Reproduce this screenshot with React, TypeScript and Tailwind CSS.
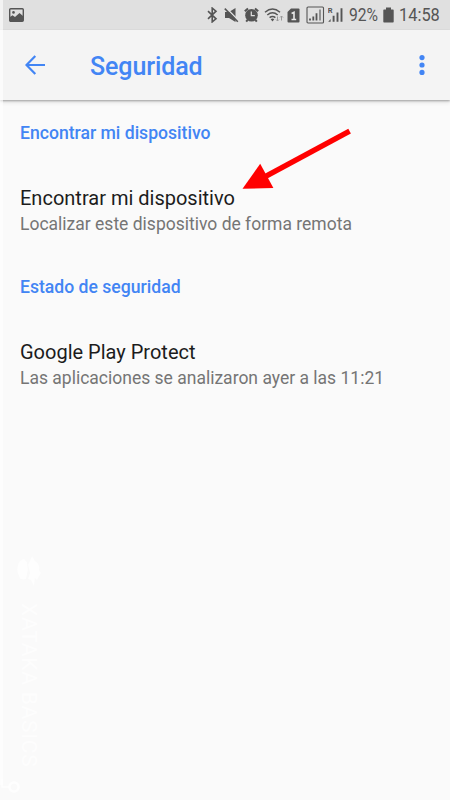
import type { ReactNode } from 'react';

interface PreferenceProps {
  title: string;
  summary: string;
}

function Preference({ title, summary }: PreferenceProps) {
  return (
    <div className="pt-[41px] pb-[39.4px]">
      <p className="text-[20px] leading-[26px] text-[#1c1c1c]">{title}</p>
      <p className="pt-px text-[17.5px] leading-[25px] text-[#757575]">{summary}</p>
    </div>
  );
}

function Category({ children }: { children: ReactNode }) {
  return <h2 className="text-[17.6px] leading-[22px] font-medium text-[#4285f4]">{children}</h2>;
}

function StatusBar() {
  return (
    <div className="flex h-[30px] items-center bg-[#e0e0e0] text-[#555]">
      <svg className="ml-[9px] shrink-0" width="15" height="14" viewBox="0 0 15 14">
        <rect x="0.7" y="0.7" width="13.6" height="12.6" rx="1" fill="none" stroke="currentColor" strokeWidth="1.4" />
        <circle cx="4.5" cy="4.4" r="1.3" fill="currentColor" />
        <path d="M1 13V9l2.5-1.8L6 9l4.5-4L14 8v5z" fill="currentColor" />
      </svg>

      {/* bluetooth */}
      <svg className="ml-[183px] shrink-0" width="11" height="16" viewBox="0 0 11 16">
        <path d="M1 4.2l8 7.6-3.8 3.1V1.1L9 4.2 1 11.8" fill="none" stroke="currentColor" strokeWidth="1.6" />
      </svg>

      {/* muted */}
      <svg className="ml-[6px] shrink-0" width="15" height="16" viewBox="0 0 15 16">
        <path d="M1 5h4l6.5-4v14L5 11H1z" fill="currentColor" />
        <path d="M1.8 .6l13 13.3" stroke="#e0e0e0" strokeWidth="1.4" />
        <path d="M.8 1.6l13 13.1" stroke="currentColor" strokeWidth="1.6" />
      </svg>

      {/* alarm */}
      <svg className="ml-[5px] shrink-0" width="15" height="16" viewBox="0 0 15 16">
        <circle cx="7.5" cy="8.2" r="6.3" fill="currentColor" />
        <path d="M.8 4.3L4 1.4M14.2 4.3L11 1.4M3.6 12.8l-1.4 1.8M11.4 12.8l1.4 1.8" stroke="currentColor" strokeWidth="2" />
        <path d="M7.3 4.6v4h3.5" fill="none" stroke="#e0e0e0" strokeWidth="1.2" />
      </svg>

      {/* wifi */}
      <svg className="ml-[5px] shrink-0" width="21" height="16" viewBox="0 0 21 16">
        <g fill="none" stroke="currentColor" strokeWidth="1.5">
          <path d="M1 5.2q7.5-6.3 15 0" />
          <path d="M3.3 8q5.2-4.4 10.4 0" />
          <path d="M5.6 10.7q2.9-2.4 5.8 0" />
        </g>
        <path d="M6.7 12.2q1.8-1.3 3.6 0L8.5 14.4z" fill="currentColor" />
        <path d="M13.5 9.5V14M12 12.5l1.5 1.5 1.5-1.5M17.5 13.5V9M16 10.5L17.5 9l1.5 1.5" fill="none" stroke="#999" strokeWidth="1" />
      </svg>

      {/* SIM 1 */}
      <svg className="ml-[2px] shrink-0" width="13" height="15" viewBox="0 0 13 15">
        <path d="M4 .5h7.5q1 0 1 1v12q0 1-1 1h-10q-1 0-1-1V4z" fill="currentColor" />
        <path d="M4.6 5.5L7 4.3v7.4M4.5 11.5h4.7" fill="none" stroke="#e8e8e8" strokeWidth="1.6" />
      </svg>

      {/* signal, SIM 1 */}
      <svg className="ml-[6px] shrink-0" width="19" height="18" viewBox="0 0 19 18">
        <rect x="1" y="1" width="16.5" height="16" rx="1" fill="none" stroke="currentColor" strokeWidth="1.1" />
        <path d="M4 14.5v-2M7.3 14.5v-4M10.5 14.5V7.3" stroke="currentColor" strokeWidth="1.8" />
        <path d="M14 14.5V3.5" stroke="#888" strokeWidth="1.8" />
      </svg>

      {/* signal, SIM 2 roaming */}
      <svg className="ml-[3px] shrink-0" width="16" height="16" viewBox="0 0 16 16">
        <text x="-0.2" y="6.4" fontSize="7.5" fontWeight="700" fill="currentColor">R</text>
        <path d="M.2 14.7l2.4-2.6v2.6z" fill="currentColor" />
        <path d="M5.6 14.7V8.7M9.5 14.7V5.4M13.5 14.7V1.3" stroke="currentColor" strokeWidth="1.9" />
      </svg>

      <div className="ml-[5px] w-[35px]">
        <span className="inline-block origin-left scale-x-[0.87] text-[18px] leading-[30px]">92%</span>
      </div>

      {/* battery */}
      <svg className="-ml-px shrink-0" width="11" height="16" viewBox="0 0 11 16">
        <path d="M3 .5h5v2h2q.7 0 .7.7v11.6q0 .7-.7.7H1q-.7 0-.7-.7V3.2q0-.7.7-.7h2z" fill="currentColor" />
      </svg>
      <div className="ml-[5px] w-[42px]">
        <span className="inline-block origin-left scale-x-[0.91] text-[18px] leading-[30px]">14:58</span>
      </div>
    </div>
  );
}

function AppBar() {
  return (
    <header className="flex h-[70px] items-center bg-[#f4f4f4] text-[#4285f4] shadow-[0_1px_2px_rgba(0,0,0,0.32),0_3px_4px_rgba(0,0,0,0.08)]">
      <svg className="ml-[25px] shrink-0" width="20" height="20" viewBox="0 0 20 20">
        <path d="M20 10H2M10.3 1L1.5 10l8.8 9" fill="none" stroke="currentColor" strokeWidth="2.2" />
      </svg>
      <h1 className="ml-[45px] pt-[3px] text-[25px] leading-[30px] font-medium tracking-[-0.1px]">Seguridad</h1>
      <svg className="mr-[25px] ml-auto shrink-0" width="6" height="20" viewBox="0 0 6 20" fill="currentColor">
        <circle cx="3" cy="2.6" r="2.6" />
        <circle cx="3" cy="10" r="2.6" />
        <circle cx="3" cy="17.4" r="2.6" />
      </svg>
    </header>
  );
}

export default function App() {
  return (
    <div className="relative h-[800px] w-[450px] overflow-hidden bg-[#fafafa] font-['Roboto',sans-serif]">
      <StatusBar />
      <AppBar />
      <main className="px-5 pt-[22px]">
        <Category>Encontrar mi dispositivo</Category>
        <Preference title="Encontrar mi dispositivo" summary="Localizar este dispositivo de forma remota" />
        <Category>Estado de seguridad</Category>
        <Preference title="Google Play Protect" summary="Las aplicaciones se analizaron ayer a las 11:21" />
      </main>

      {/* pointer over the first preference */}
      <svg className="absolute top-[125px] left-[238px]" width="120" height="68" viewBox="0 0 120 68" fill="#ff0000">
        <path d="M110.3 3.8l2.6 4.8L28 54.2l-2.6-4.8z" />
        <path d="M4.5 63.8L22.2 38.8 35.4 63z" />
      </svg>

      {/* watermark */}
      <div className="absolute top-[556px] left-[17px] flex w-[24px] flex-col items-center text-white/70">
        <svg width="24" height="32" viewBox="0 0 24 32" fill="currentColor">
          <path d="M1 9q1-5 6-6l3 3 1 8-2 9q-6 2-7-3-3-5-1-11z" />
          <path d="M11 9l4-9 3 5q6 4 4 9l2 3-4 7-2-2-1 8-3-6-3-1 2-6z" />
        </svg>
        <span className="mt-[15px] text-[21px] leading-[24px] tracking-[0.8px] whitespace-nowrap [writing-mode:vertical-rl]">XATAKA BASICS</span>
      </div>
      <svg className="absolute top-[779px] left-0 text-white/80" width="22" height="16" viewBox="0 0 22 16" fill="none" stroke="currentColor">
        <path d="M2 0v8h7" strokeWidth="1.5" />
        <circle cx="14" cy="8" r="4.5" strokeWidth="2.5" />
      </svg>
      <div className="absolute top-0 left-0 h-[785px] w-[3px] bg-white/60" />
    </div>
  );
}
